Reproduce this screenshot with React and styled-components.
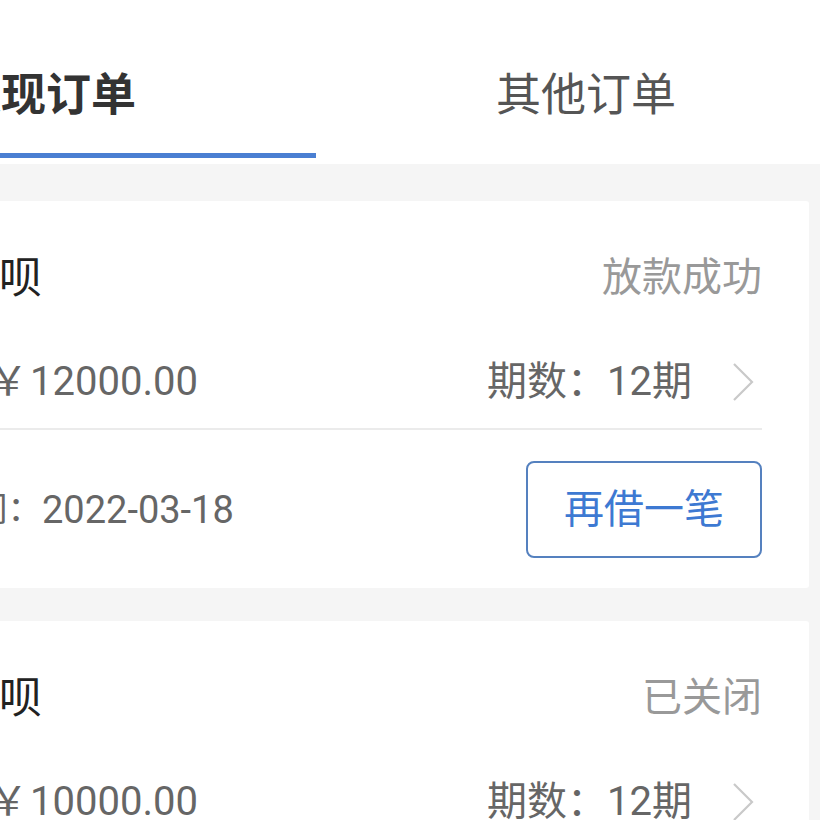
import React, { useState } from 'react'
import styled, { createGlobalStyle } from 'styled-components'

const GlobalStyle = createGlobalStyle`
  html, body {
    margin: 0;
    padding: 0;
    background: #f5f5f5;
    overflow: hidden;
  }
  body {
    font-family: Roboto, "Noto Sans CJK SC", sans-serif;
  }
`

// the screenshot is a crop of a 1080 wide phone screen, 224px in from the left
const Page = styled.div`
  width: 1080px;
  margin-left: -224px;
  background: #f5f5f5;
  min-height: 820px;
`

const TabBar = styled.div`
  display: flex;
  background: #fff;
  height: 164px;
`

const Tab = styled.div`
  flex: 1;
  display: flex;
  flex-direction: column;
  align-items: center;
`

const TabLabel = styled.div`
  flex: 1;
  display: flex;
  align-items: center;
  padding-top: 37px;
  font-size: 45px;
  line-height: 1;
  font-weight: ${p => (p.active ? 700 : 400)};
  color: ${p => (p.active ? '#333' : '#555')};
`

const Indicator = styled.div`
  width: 100%;
  height: 5px;
  margin-bottom: 6px;
  background: ${p => (p.active ? '#4a7fd2' : 'transparent')};
`

const List = styled.div`
  display: flex;
  flex-direction: column;
  gap: 33px;
  padding: 37px 47px;
`

const Card = styled.div`
  background: #fff;
  border-radius: 3px;
  padding: 0 47px;
`

const Top = styled.div`
  padding-top: 37px;
`

const TitleRow = styled.div`
  display: flex;
  align-items: center;
  justify-content: space-between;
  height: 80px;
`

const Title = styled.div`
  font-size: 43px;
  line-height: 1;
  color: #222;
`

const Status = styled.div`
  font-size: 40px;
  line-height: 1;
  color: #999;
`

const AmountRow = styled.div`
  display: flex;
  align-items: center;
  justify-content: space-between;
  height: 92px;
  margin-top: 18px;
`

const Amount = styled.div`
  display: flex;
  align-items: center;
  color: #666;
  line-height: 1;
`

const AmountLabel = styled.span`
  font-size: 29.5px;
`

const Yen = styled.span`
  font-size: 40px;
  margin-right: 2px;
`

const AmountValue = styled.span`
  font-size: 40px;
`

const Period = styled.div`
  display: flex;
  align-items: center;
  font-size: 40px;
  line-height: 1;
  color: #666;
`

const Chevron = styled.svg`
  width: 24px;
  height: 40px;
  margin-left: 39px;
  margin-right: 7px;
`

const Divider = styled.div`
  height: 2px;
  background: #ebebeb;
`

const Bottom = styled.div`
  display: flex;
  align-items: center;
  justify-content: space-between;
  padding: 31px 0 30px;
`

const DateText = styled.div`
  display: flex;
  align-items: center;
  color: #666;
  line-height: 1;
`

const DateLabel = styled.span`
  font-size: 34.4px;
`

const DateValue = styled.span`
  font-size: 38px;
`

const Button = styled.button`
  width: 236px;
  height: 97px;
  box-sizing: border-box;
  border: 2.5px solid #5581bf;
  border-radius: 8px;
  background: #fff;
  color: #3d79d2;
  font-family: inherit;
  font-size: 40px;
  line-height: 1;
  padding: 0;
`

const orders = [
  { title: '蚂蚁借呗', status: '放款成功', amount: '12000.00', periods: 12, date: '2022-03-18', again: true },
  { title: '蚂蚁借呗', status: '已关闭', amount: '10000.00', periods: 12, date: '2022-02-10', again: false },
]

const OrderCard = ({ order }) => (
  <Card>
    <Top>
      <TitleRow>
        <Title>{order.title}</Title>
        <Status>{order.status}</Status>
      </TitleRow>
      <AmountRow>
        <Amount>
          <AmountLabel>借款金额</AmountLabel>
          <Yen>￥</Yen>
          <AmountValue>{order.amount}</AmountValue>
        </Amount>
        <Period>
          期数：{order.periods}期
          <Chevron viewBox="0 0 24 40" fill="none">
            <path d="M3 2 L21 20 L3 38" stroke="#c9c9c9" strokeWidth="2.2" />
          </Chevron>
        </Period>
      </AmountRow>
    </Top>
    <Divider />
    <Bottom>
      <DateText>
        <DateLabel>借款时间：</DateLabel>
        <DateValue>{order.date}</DateValue>
      </DateText>
      {order.again && <Button>再借一笔</Button>}
    </Bottom>
  </Card>
)

export default function App() {
  const [tab, setTab] = useState(0)
  const tabs = ['提现订单', '其他订单']

  return (
    <>
      <GlobalStyle />
      <Page>
        <TabBar>
          {tabs.map((t, i) => (
            <Tab key={t} onClick={() => setTab(i)}>
              <TabLabel active={tab === i}>{t}</TabLabel>
              <Indicator active={tab === i} />
            </Tab>
          ))}
        </TabBar>
        <List>
          {orders.map((o, i) => (
            <OrderCard key={i} order={o} />
          ))}
        </List>
      </Page>
    </>
  )
}
